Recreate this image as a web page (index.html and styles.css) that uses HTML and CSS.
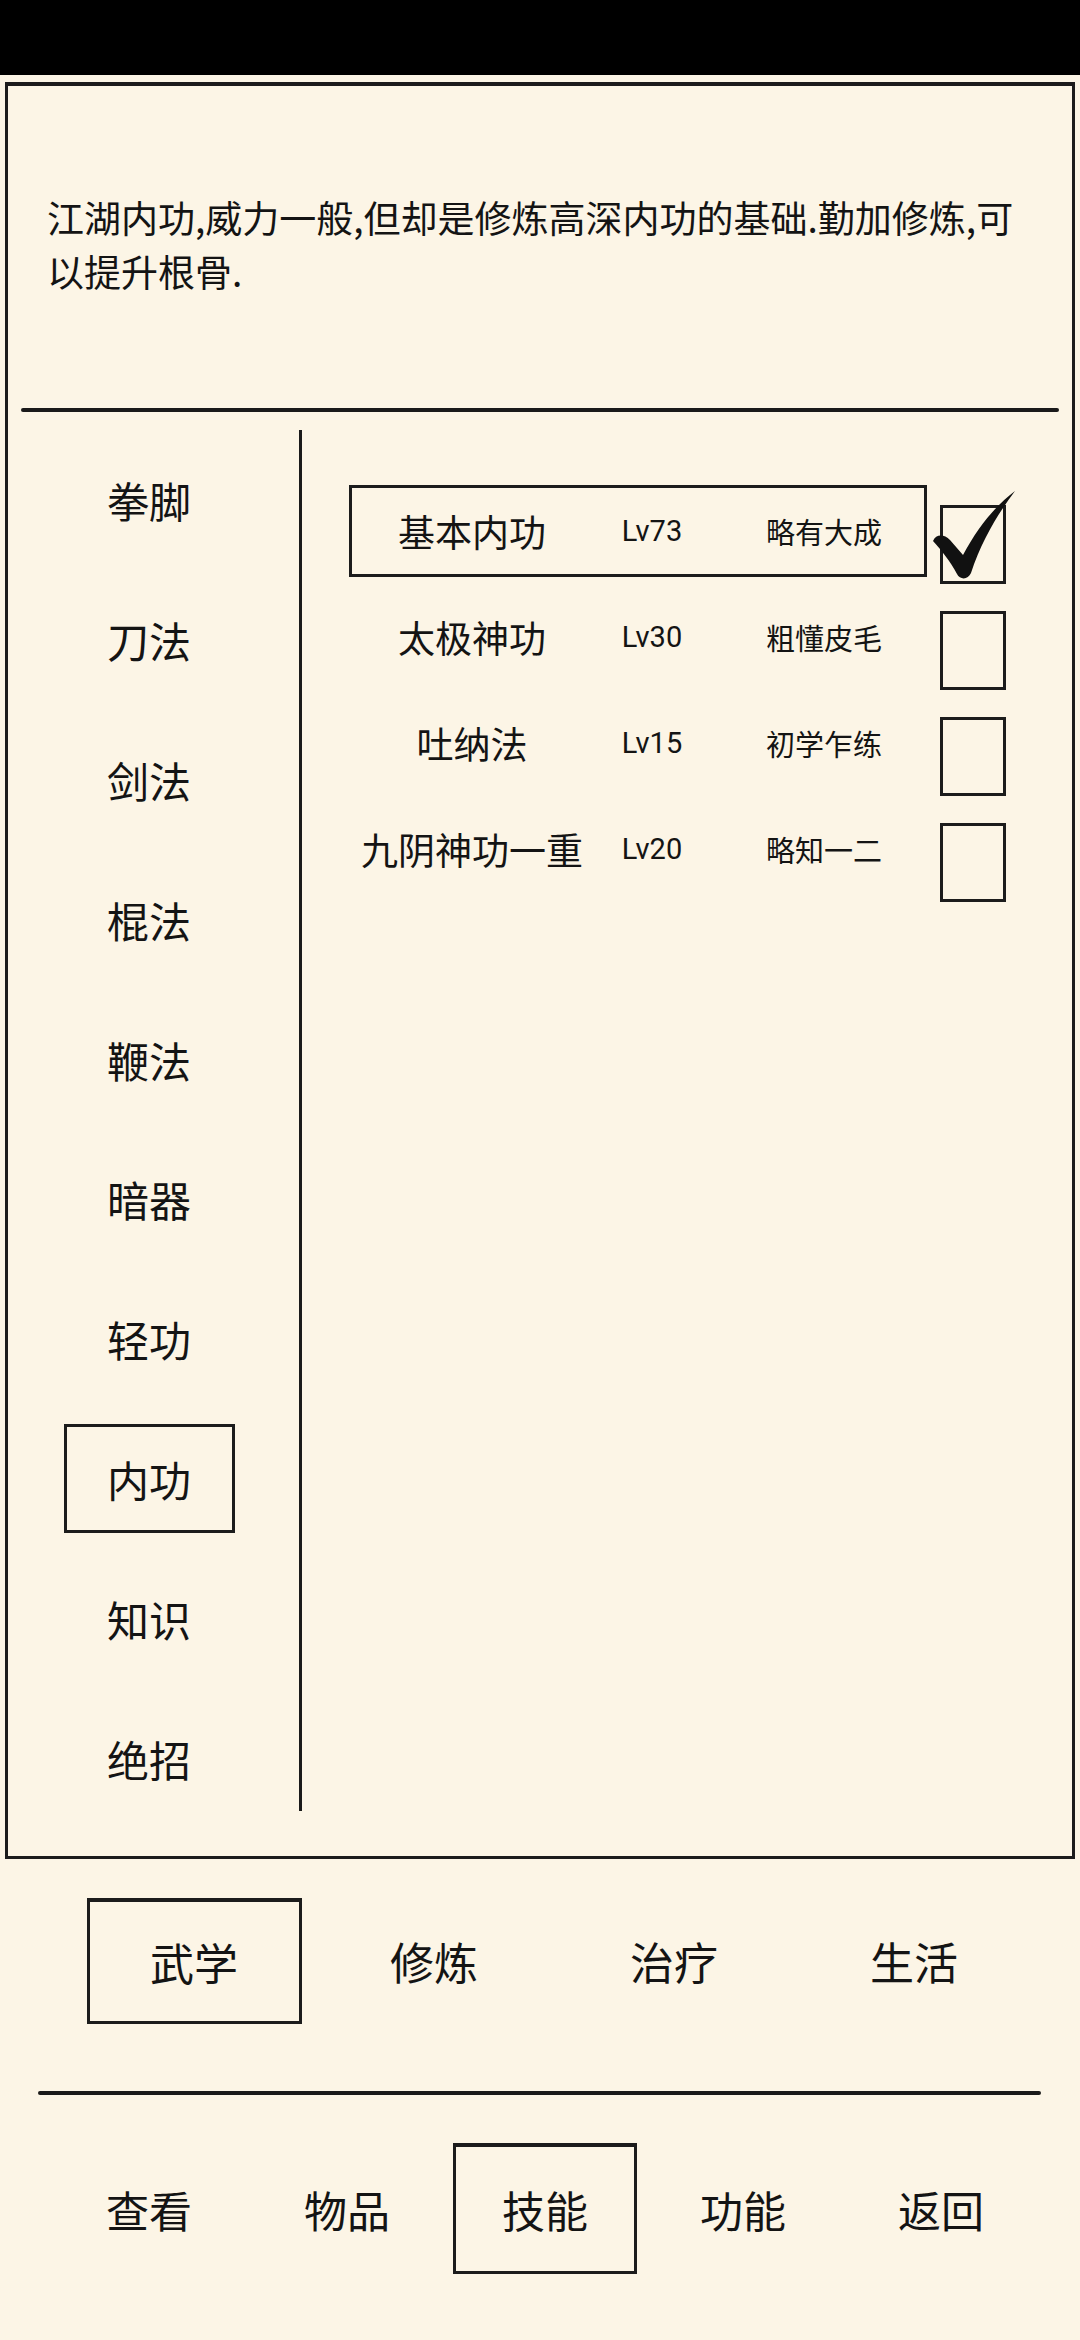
FILE: index.html
```html
<!DOCTYPE html>
<html lang="zh-CN">
<head>
<meta charset="utf-8">
<title>技能</title>
<link rel="stylesheet" href="styles.css">
</head>
<body>
<div class="statusbar"></div>
<div class="panel">
  <div class="desc">江湖内功,威力一般,但却是修炼高深内功的基础.勤加修炼,可以提升根骨.</div>
  <div class="rule"></div>
  <div class="main">
    <div class="cats">
      <div class="cat"><span>拳脚</span></div>
      <div class="cat"><span>刀法</span></div>
      <div class="cat"><span>剑法</span></div>
      <div class="cat"><span>棍法</span></div>
      <div class="cat"><span>鞭法</span></div>
      <div class="cat"><span>暗器</span></div>
      <div class="cat"><span>轻功</span></div>
      <div class="cat"><span class="sel">内功</span></div>
      <div class="cat"><span>知识</span></div>
      <div class="cat"><span>绝招</span></div>
    </div>
    <div class="vline"></div>
    <div class="skills">
      <div class="row">
        <div class="entry sel">
          <span class="name">基本内功</span><span class="lv">Lv73</span><span class="stage">略有大成</span>
        </div>
        <div class="check">
          <svg class="tick" viewBox="0 0 90 90" width="90" height="90"><path d="M3,52 C6,45 14,45 20,51 L33,66 C48,38 66,16 85,2 C70,22 52,50 41,84 C38,91 30,91 27,85 C20,72 12,62 3,52 Z" fill="#111"/></svg>
        </div>
      </div>
      <div class="row">
        <div class="entry">
          <span class="name">太极神功</span><span class="lv">Lv30</span><span class="stage">粗懂皮毛</span>
        </div>
        <div class="check"></div>
      </div>
      <div class="row">
        <div class="entry">
          <span class="name">吐纳法</span><span class="lv">Lv15</span><span class="stage">初学乍练</span>
        </div>
        <div class="check"></div>
      </div>
      <div class="row">
        <div class="entry">
          <span class="name">九阴神功一重</span><span class="lv">Lv20</span><span class="stage">略知一二</span>
        </div>
        <div class="check"></div>
      </div>
    </div>
  </div>
</div>
<div class="subtabs">
  <div class="tab"><span class="sel">武学</span></div>
  <div class="tab"><span>修炼</span></div>
  <div class="tab"><span>治疗</span></div>
  <div class="tab"><span>生活</span></div>
</div>
<div class="rule2"></div>
<div class="navtabs">
  <div class="nav"><span>查看</span></div>
  <div class="nav"><span>物品</span></div>
  <div class="nav"><span class="sel">技能</span></div>
  <div class="nav"><span>功能</span></div>
  <div class="nav"><span>返回</span></div>
</div>
</body>
</html>
```

FILE: styles.css
```css
* { box-sizing: border-box; }
html, body { margin: 0; padding: 0; }
body {
  width: 1080px;
  height: 2340px;
  overflow: hidden;
  background: #fcf5e6;
  color: #141414;
  font-family: "Noto Sans CJK SC", "Noto Sans", sans-serif;
}
.statusbar {
  height: 75px;
  background: #000;
}
.panel {
  margin: 7px 5px 0 5px;
  height: 1777px;
  border: 3px solid #1c1c1c;
  border-top-width: 4px;
  display: flex;
  flex-direction: column;
}
.desc {
  height: 322px;
  padding: 104px 40px 0 39px;
  font-size: 37px;
  line-height: 54px;
}
.rule {
  height: 4px;
  margin: 0 13px;
  background: #1a1a1a;
  border-radius: 2px;
}
.main {
  flex: 1;
  display: flex;
  align-items: flex-start;
}
.cats {
  width: 291px;
  padding: 18px 9px 0 0;
  display: flex;
  flex-direction: column;
}
.cat {
  height: 139.8px;
  display: flex;
  align-items: center;
  justify-content: center;
  font-size: 42px;
}
.cat span {
  display: flex;
  align-items: center;
  justify-content: center;
  width: 171px;
  height: 109px;
  border: 3px solid transparent;
}
.cat span.sel { border-color: #1c1c1c; }
.vline {
  width: 3px;
  height: 1381px;
  margin-top: 18px;
  background: #1a1a1a;
}
.skills {
  flex: 1;
  padding: 73px 0 0 47px;
  display: flex;
  flex-direction: column;
  gap: 14px;
}
.row {
  height: 92px;
  display: flex;
  align-items: flex-start;
}
.entry {
  width: 578px;
  height: 92px;
  border: 3px solid transparent;
  display: grid;
  grid-template-columns: 240px 120px 212px;
  align-items: center;
}
.entry.sel { border-color: #1c1c1c; }
.name {
  text-align: center;
  font-size: 37px;
  white-space: nowrap;
}
.lv {
  text-align: center;
  font-family: Roboto, "Noto Sans", sans-serif;
  font-size: 29px;
}
.stage {
  padding-left: 54px;
  font-size: 29px;
  white-space: nowrap;
}
.check {
  position: relative;
  flex: none;
  width: 66px;
  height: 79px;
  margin: 20px 0 0 13px;
  border: 3px solid #1c1c1c;
}
.tick {
  position: absolute;
  left: -13px;
  top: -19px;
  overflow: visible;
}
.subtabs {
  display: flex;
  padding: 39px 0 0 74px;
}
.tab {
  width: 240px;
  height: 126px;
  display: flex;
  justify-content: center;
  font-size: 44px;
}
.tab span {
  display: flex;
  align-items: center;
  justify-content: center;
  width: 215px;
  height: 126px;
  border: 3px solid transparent;
}
.tab span.sel { border-color: #1c1c1c; border-top-width: 4px; }
.rule2 {
  width: 1003px;
  height: 4px;
  margin: 67px 0 0 38px;
  background: #1a1a1a;
  border-radius: 2px;
}
.navtabs {
  display: flex;
  padding: 48px 0 0 50px;
}
.nav {
  width: 198px;
  height: 131px;
  display: flex;
  justify-content: center;
  font-size: 43px;
}
.nav span {
  display: flex;
  align-items: center;
  justify-content: center;
  width: 184px;
  height: 131px;
  border: 3px solid transparent;
}
.nav span.sel { border-color: #1c1c1c; border-top-width: 4px; }
```
